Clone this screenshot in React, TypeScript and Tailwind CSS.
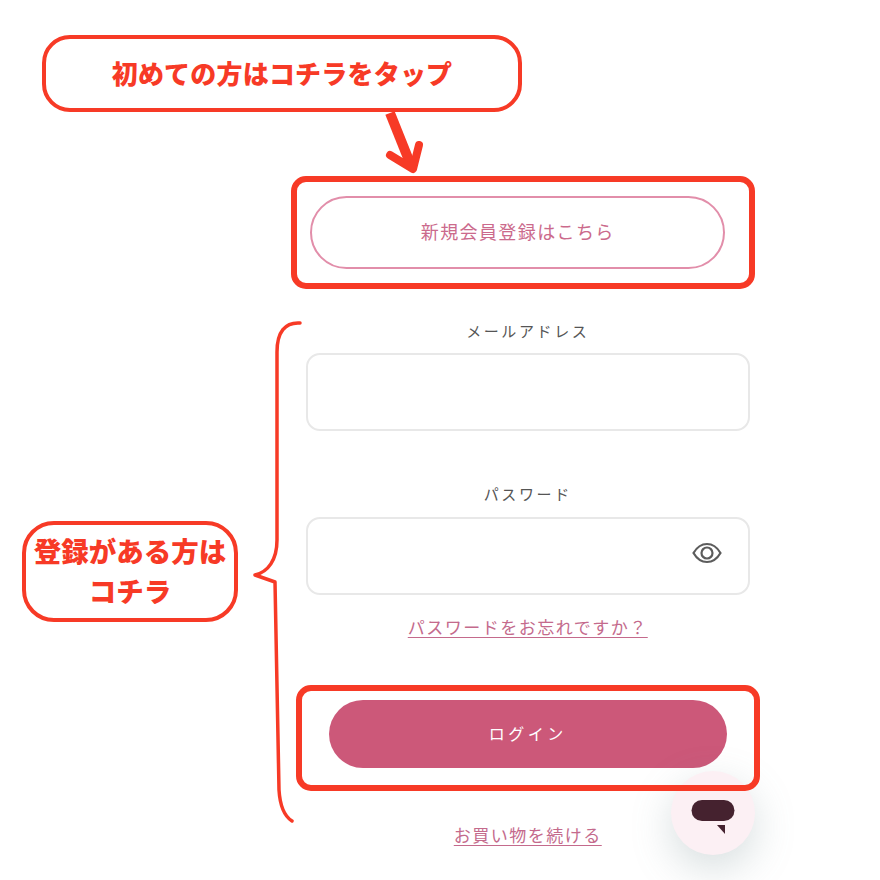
const jp = "font-['Noto_Sans_CJK_JP',sans-serif]";

const Annotations = () => (
  <>
    {/* Top callout */}
    <div className={`absolute left-[42px] top-[35px] flex h-[77px] w-[480px] items-center justify-center rounded-[28px] border-4 border-[#f73a26] pb-[3px] text-[26px] font-black tracking-[0.2px] text-[#f73a26] ${jp}`}>
      初めての方はコチラをタップ
    </div>

    {/* Left callout */}
    <div className={`absolute left-[22px] top-[521px] flex h-[101px] w-[216px] flex-col items-center justify-center rounded-[32px] border-4 border-[#f73a26] pb-[4px] text-[27.5px] font-black leading-[40px] text-[#f73a26] ${jp}`}>
      <span>登録がある方は</span>
      <span>コチラ</span>
    </div>

    {/* Highlight frames */}
    <div className="absolute left-[291px] top-[176px] h-[113px] w-[464px] rounded-[15px] border-[6px] border-[#f73a26]" />
    <div className="absolute left-[296px] top-[685px] h-[106px] w-[464px] rounded-[15px] border-[6px] border-[#f73a26]" />

    {/* Arrow and brace */}
    <svg className="pointer-events-none absolute inset-0" width="880" height="880" fill="none" stroke="#f73a26" strokeLinecap="round" strokeLinejoin="round">
      <path d="M390 113 L412 168" strokeWidth="10" strokeLinecap="butt" />
      <path d="M390 155 L413 169 L419 145" strokeWidth="8" />
      <path
        d="M300 323 C285 322 277 332 277 352 L277 540 C277 560 268 572 255 575 L275 582 L279 790 C280 806 284 816 292 821"
        strokeWidth="3.5"
      />
    </svg>
  </>
);

const ChatBubble = () => (
  <div className="absolute left-[671px] top-[771px] flex h-[84px] w-[84px] items-center justify-center rounded-full bg-[#fcf0f4] shadow-[0_14px_40px_rgba(110,135,140,0.28)]">
    <svg className="mt-[10px]" width="44" height="36" viewBox="0 0 44 36">
      <rect x="0.5" y="0" width="43" height="21" rx="10.5" fill="#45222f" />
      <path d="M26 25 H34 V34 Z" fill="#45222f" />
    </svg>
  </div>
);

export default function App() {
  return (
    <div className={`relative h-[880px] w-[880px] overflow-hidden bg-white ${jp}`}>
      <div className="ml-[305.5px] flex w-[444.5px] flex-col items-center pt-[195.5px]">
        <button className="ml-[-20px] h-[73px] w-[415px] rounded-full border-2 border-[#e28eaa] pb-[2px] text-[18px] tracking-[1.4px] text-[#cb6a8c]">
          新規会員登録はこちら
        </button>

        <label className="mt-[52px] text-[15px] leading-[20px] tracking-[2.6px] text-[#555]">メールアドレス</label>
        <div className="mt-[12.5px] h-[78px] w-full rounded-[14px] border-2 border-[#e8e8e8]" />

        <label className="mt-[53px] text-[15px] leading-[20px] tracking-[2.6px] text-[#555]">パスワード</label>
        <div className="mt-[13px] flex h-[78px] w-full items-center justify-end rounded-[14px] border-2 border-[#e8e8e8] pb-[7px] pr-[26px]">
          <svg width="30" height="22" viewBox="0 0 30 22" fill="none" stroke="#5c5c5c" strokeWidth="2.2">
            <path d="M1.5 11 C5 5 10 2 15 2 S25 5 28.5 11 C25 17 20 20 15 20 S5 17 1.5 11 Z" />
            <circle cx="15" cy="11" r="5.5" />
          </svg>
        </div>

        <a className="mt-[21px] text-[17px] leading-[22px] tracking-[1.5px] text-[#c46a8c] underline underline-offset-[3px]">
          パスワードをお忘れですか？
        </a>

        <button className="mt-[62px] h-[68px] w-[398px] rounded-full bg-[#cc5879] pb-[2px] text-[16px] tracking-[3.5px] text-white">
          ログイン
        </button>

        <a className="mt-[56px] text-[17px] leading-[22px] tracking-[1.5px] text-[#c46a8c] underline underline-offset-[3px]">
          お買い物を続ける
        </a>
      </div>

      <ChatBubble />
      <Annotations />
    </div>
  );
}
